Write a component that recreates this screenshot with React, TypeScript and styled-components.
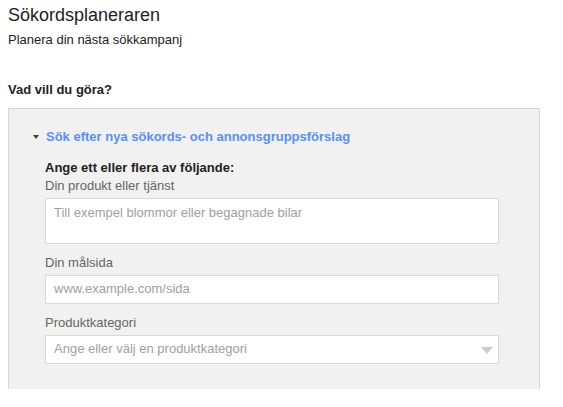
import { styled, createGlobalStyle } from "styled-components";

const GlobalStyle = createGlobalStyle`
  html, body {
    margin: 0;
    padding: 0;
    background-color: #FFFFFF;
  }
  body {
    font-family: "Liberation Sans", Arial, sans-serif;
    color: #222222;
  }
`;

const Page = styled.div`
  padding: 3px 23px 0 8px;
`;

const Title = styled.h1`
  font-size: 18px;
  font-weight: normal;
  color: #222222;
  margin: 0;
  line-height: 24px;
`;

const Subtitle = styled.div`
  font-size: 13px;
  color: #222222;
  line-height: 18px;
  margin-top: 4px;
`;

const Question = styled.h2`
  font-size: 13px;
  font-weight: bold;
  color: #222222;
  margin: 32px 0 0 0;
  line-height: 18px;
`;

const Panel = styled.div`
  box-sizing: border-box;
  margin-top: 9px;
  height: 281px;
  background-color: #F1F1F1;
  border: 1px solid #D6D6D6;
  border-bottom: none;
  padding: 19px 40px 0 24px;
`;

const SectionHeader = styled.div`
  display: flex;
  align-items: center;
  gap: 6px;
  font-size: 13px;
  font-weight: bold;
  color: #5B8FF9;
  line-height: 18px;
  cursor: pointer;
`;

const Caret = styled.span`
  width: 0;
  height: 0;
  border-left: 3.5px solid transparent;
  border-right: 3.5px solid transparent;
  border-top: 4px solid #444444;
  margin-right: 1px;
`;

const Form = styled.div`
  padding-left: 12px;
  margin-top: 13px;
`;

const FormTitle = styled.div`
  font-size: 13px;
  font-weight: bold;
  color: #222222;
  line-height: 18px;
`;

const Label = styled.div<{ $gap?: number }>`
  font-size: 13px;
  color: #666666;
  line-height: 18px;
  margin-top: ${props => props.$gap ?? 0}px;
  margin-bottom: 3px;
`;

const Field = styled.div<{ $tall?: boolean }>`
  position: relative;
  box-sizing: border-box;
  height: ${props => props.$tall ? '46px' : '29px'};
  background-color: #FFFFFF;
  border: 1px solid #D9D9D9;
  padding: ${props => props.$tall ? '6px' : '5px'} 8px 0 8px;
  font-size: 13px;
  line-height: 16px;
  color: #A0A0A0;
`;

const SelectArrow = styled.span`
  position: absolute;
  right: 5px;
  top: 11px;
  width: 0;
  height: 0;
  border-left: 6px solid transparent;
  border-right: 6px solid transparent;
  border-top: 7px solid #CCCCCC;
`;

const App = () => {
  return (
    <>
      <GlobalStyle />
      <Page>
        <Title>Sökordsplaneraren</Title>
        <Subtitle>Planera din nästa sökkampanj</Subtitle>
        <Question>Vad vill du göra?</Question>
        <Panel>
          <SectionHeader>
            <Caret />
            Sök efter nya sökords- och annonsgruppsförslag
          </SectionHeader>
          <Form>
            <FormTitle>Ange ett eller flera av följande:</FormTitle>
            <Label>Din produkt eller tjänst</Label>
            <Field $tall>Till exempel blommor eller begagnade bilar</Field>
            <Label $gap={10}>Din målsida</Label>
            <Field>www.example.com/sida</Field>
            <Label $gap={10}>Produktkategori</Label>
            <Field>
              Ange eller välj en produktkategori
              <SelectArrow />
            </Field>
          </Form>
        </Panel>
      </Page>
    </>
  );
};

export default App;
